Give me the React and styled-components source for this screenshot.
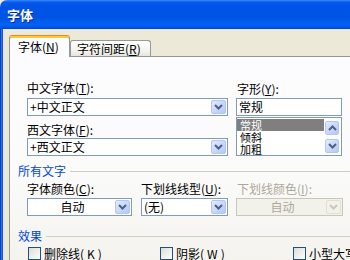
import React from 'react';
import styled, { createGlobalStyle } from 'styled-components';

const GlobalStyle = createGlobalStyle`
  html, body { margin: 0; padding: 0; background: #ECE9D8; overflow: hidden; }
  body { font-family: "Noto Sans CJK SC", "Noto Sans", sans-serif; font-size: 12px; color: #000; }
  * { box-sizing: border-box; }
`;

const Window = styled.div`
  width: 350px;
  height: 260px;
  display: flex;
  flex-direction: column;
  overflow: hidden;
  background: #ECE9D8;
`;

const TitleBar = styled.div`
  height: 29px;
  flex: none;
  display: flex;
  align-items: center;
  padding-left: 7px;
  border-top-left-radius: 7px;
  background: linear-gradient(to bottom, #3B8CF5 0, #0A5CEF 2px, #0053E8 5px, #0054E3 60%, #0462F3 85%, #0157EA 94%, #0041CC 100%);
  color: #fff;
  font-weight: bold;
  font-size: 13px;
  line-height: 13px;
  text-shadow: 1px 1px #0C2A95;
`;

const Body = styled.div`
  flex: 1;
  min-height: 0;
  display: flex;
  flex-direction: column;
  padding: 6px 0 0 9px;
  background: linear-gradient(to right, #0A3FD4 0 1px, #2F72F0 1px 2px, #1558E4 2px 3px, #ECE9D8 3px);
`;

const TabStrip = styled.div`
  display: flex;
  align-items: flex-end;
  height: 21px;
  flex: none;
  position: relative;
  z-index: 1;
`;

const Tab = styled.div`
  display: flex;
  align-items: center;
  width: ${p => (p.$active ? 61 : 81)}px;
  height: ${p => (p.$active ? 22 : 16)}px;
  margin-bottom: ${p => (p.$active ? -1 : 0)}px;
  padding-left: ${p => (p.$active ? 8 : 6)}px;
  border: 1px solid #919B9C;
  border-bottom: none;
  border-top-color: ${p => (p.$active ? '#E68B2C' : '#919B9C')};
  border-radius: 3px 3px 0 0;
  background: ${p => (p.$active ? '#FCFCFE' : 'linear-gradient(to bottom, #FFFFFF, #F3F2ED 70%, #E6E4DC)')};
  box-shadow: ${p => (p.$active ? 'inset 0 2px 0 #FFC83C' : 'none')};
  line-height: 14px;
  white-space: nowrap;
`;

const Panel = styled.div`
  flex: 1;
  border-top: 1px solid #919B9C;
  border-left: 1px solid #919B9C;
  background: linear-gradient(to bottom, #FCFCFE 0%, #FBFBFA 55%, #F4F3EE 100%);
  padding: 25px 0 0 17px;
  display: flex;
  flex-direction: column;
`;

const FontGrid = styled.div`
  display: grid;
  grid-template-columns: 201px 106px;
  column-gap: 8px;
`;

const Column = styled.div`
  display: flex;
  flex-direction: column;
`;

const Label = styled.div`
  line-height: 12px;
  white-space: nowrap;
  color: ${p => (p.$disabled ? '#ACA899' : '#000')};
  margin-top: ${p => p.$mt || 0}px;
  margin-bottom: ${p => (p.$mb ?? 4)}px;
  margin-left: ${p => p.$ml || 0}px;
`;

const Key = styled.span`
  text-decoration: underline;
`;

const Combo = styled.div`
  height: 18px;
  display: flex;
  align-items: stretch;
  padding: 1px;
  border: 1px solid ${p => (p.$disabled ? '#C9C7BA' : '#7F9DB9')};
  background: ${p => (p.$disabled ? '#F3F2EA' : '#FFFFFF')};
`;

const ComboText = styled.span`
  flex: 1;
  padding-left: 1px;
  line-height: 14px;
  text-align: ${p => (p.$center ? 'center' : 'left')};
  color: ${p => (p.$disabled ? '#ACA899' : '#000')};
  white-space: nowrap;
`;

const ArrowButton = styled.span`
  width: ${p => p.$w || 15}px;
  height: ${p => (p.$h ? `${p.$h}px` : 'auto')};
  flex: none;
  display: flex;
  align-items: center;
  justify-content: center;
  border-radius: 2px;
  border: 1px solid ${p => (p.$disabled ? '#E2E0D6' : '#B3C6F2')};
  background: ${p => (p.$disabled
    ? '#F3F2EA'
    : 'linear-gradient(135deg, #E4ECFD 0%, #C9D8FB 50%, #B5C9F7 100%)')};
`;

const TextBox = styled.div`
  height: 18px;
  border: 1px solid #7F9DB9;
  background: #fff;
  padding-left: 2px;
  line-height: 16px;
`;

const ListBox = styled.div`
  height: 39px;
  margin-top: 1px;
  border: 1px solid #7F9DB9;
  background: #fff;
  display: flex;
  padding: 1px 1px 1px 0;
`;

const ListItems = styled.div`
  flex: 1;
  display: flex;
  flex-direction: column;
`;

const ListItem = styled.div`
  height: 12px;
  line-height: 12px;
  font-size: 11px;
  padding-left: 3px;
  color: ${p => (p.$selected ? '#fff' : '#000')};
  background: ${p => (p.$selected ? '#7F7F7F' : 'transparent')};
`;

const ScrollBar = styled.div`
  width: 16px;
  display: flex;
  flex-direction: column;
  justify-content: space-between;
  align-items: center;
  padding: 2px 0 1px;
`;

const SectionHeader = styled.div`
  display: flex;
  align-items: center;
  margin-left: -9px;
  margin-top: ${p => p.$mt}px;
  line-height: 12px;
  color: #0046D5;
`;

const Rule = styled.span`
  flex: 1;
  height: 1px;
  margin-left: 4px;
  background: #D0D0BF;
`;

const ColorGrid = styled.div`
  display: grid;
  grid-template-columns: 105px 87px 106px;
  column-gap: 9px;
  margin-top: 6px;
  & > :nth-child(3) { margin-left: -1px; }
`;

const CheckRow = styled.div`
  display: grid;
  grid-template-columns: 132px 133px 1fr;
  margin-top: 5px;
  margin-left: 1px;
`;

const CheckItem = styled.label`
  display: flex;
  align-items: center;
  gap: 3px;
  white-space: nowrap;
  line-height: 13px;
`;

const CheckBox = styled.span`
  width: 13px;
  height: 13px;
  flex: none;
  border: 1px solid #1C5180;
  background: linear-gradient(135deg, #DCDCD7 0%, #F1F1EE 60%, #FFFFFF 100%);
`;

const Chevron = ({ up, color = '#4D6185' }) => (
  <svg width="9" height="6" viewBox="0 0 9 6">
    <path
      d={up ? 'M1 5 L4.5 1.5 L8 5' : 'M1 1 L4.5 4.5 L8 1'}
      stroke={color}
      strokeWidth="2"
      fill="none"
    />
  </svg>
);

const L = ({ text, k, colon = true }) => (
  <>
    {text}(<Key>{k}</Key>){colon ? ':' : ''}
  </>
);

const ComboBox = ({ value, center, disabled }) => (
  <Combo $disabled={disabled}>
    <ComboText $center={center} $disabled={disabled}>{value}</ComboText>
    <ArrowButton $disabled={disabled}>
      <Chevron color={disabled ? '#C9C7BA' : '#4D6185'} />
    </ArrowButton>
  </Combo>
);

export default function App() {
  return (
    <>
      <GlobalStyle />
      <Window>
        <TitleBar>字体</TitleBar>
        <Body>
          <TabStrip>
            <Tab $active><L text="字体" k="N" colon={false} /></Tab>
            <Tab><L text="字符间距" k="R" colon={false} /></Tab>
          </TabStrip>
          <Panel>
            <FontGrid>
              <Column>
                <Label><L text="中文字体" k="T" /></Label>
                <ComboBox value="+中文正文" />
                <Label $mt={8} $mb={2}><L text="西文字体" k="F" /></Label>
                <ComboBox value="+西文正文" />
              </Column>
              <Column>
                <Label $ml={1} $mt={1} $mb={3}><L text="字形" k="Y" /></Label>
                <TextBox>常规</TextBox>
                <ListBox>
                  <ListItems>
                    <ListItem $selected>常规</ListItem>
                    <ListItem>倾斜</ListItem>
                    <ListItem>加粗</ListItem>
                  </ListItems>
                  <ScrollBar>
                    <ArrowButton $w={14} $h={14}><Chevron up /></ArrowButton>
                    <ArrowButton $w={14} $h={14}><Chevron /></ArrowButton>
                  </ScrollBar>
                </ListBox>
              </Column>
            </FontGrid>

            <SectionHeader $mt={9}>所有文字<Rule /></SectionHeader>
            <ColorGrid>
              <Column>
                <Label $mb={3}><L text="字体颜色" k="C" /></Label>
                <ComboBox value="自动" center />
              </Column>
              <Column>
                <Label $mb={3}><L text="下划线线型" k="U" /></Label>
                <ComboBox value="(无)" />
              </Column>
              <Column>
                <Label $mb={3} $disabled $ml={1}><L text="下划线颜色" k="I" /></Label>
                <ComboBox value="自动" center disabled />
              </Column>
            </ColorGrid>

            <SectionHeader $mt={14}>效果<Rule /></SectionHeader>
            <CheckRow>
              <CheckItem><CheckBox /><L text="删除线" k="K" colon={false} /></CheckItem>
              <CheckItem><CheckBox /><L text="阴影" k="W" colon={false} /></CheckItem>
              <CheckItem><CheckBox /><L text="小型大写字母" k="M" colon={false} /></CheckItem>
            </CheckRow>
          </Panel>
        </Body>
      </Window>
    </>
  );
}
